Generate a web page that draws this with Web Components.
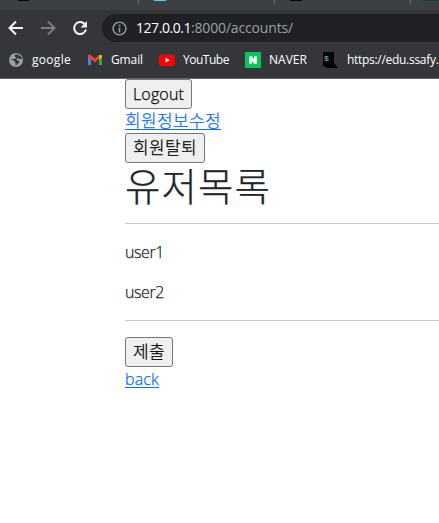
<!DOCTYPE html>
<html lang="ko">
<head>
<meta charset="utf-8">
<title>accounts</title>
<style>
html,body{margin:0;height:100%;overflow:hidden;background:#fff}
body{font-family:"Open Sans","Noto Sans CJK KR",sans-serif}
</style>
</head>
<body>
<browser-window></browser-window>
<script>
// A single line of text whose tracking is adjusted to fill the width given in its w attribute.
customElements.define('fit-text', class extends HTMLElement {
  connectedCallback() {
    if (this.shadowRoot) return;
    const r = this.attachShadow({mode: 'open'});
    r.innerHTML = '<style>:host{display:inline-block;white-space:nowrap}span{display:inline-block;text-decoration:inherit}</style><span><slot></slot></span>';
    const w = +this.getAttribute('w');
    this.style.width = w + 'px';
    const s = r.querySelector('span');
    s.style.letterSpacing = (w - s.getBoundingClientRect().width) / this.textContent.length + 'px';
  }
});
const define = (name, html) => customElements.define(name, class extends HTMLElement {
  connectedCallback() {
    if (!this.shadowRoot) this.attachShadow({mode: 'open'}).innerHTML = html;
  }
});
define('tab-strip', `<style>
:host{display:grid;grid-template-columns:18px 11px 109px 1px 15px 12px 108px 1px 15px 12px 108px 1px 12px 16px;height:10px;background:#3c4043;align-items:start}
i{height:1px}.b{background:#000}.c{background:#62c9ee}.g{background:#123f36}.s{height:4px;background:#6b6e72}
</style><i></i><i class="b"></i><i></i><i class="s"></i><i></i><i class="c"></i><i></i><i class="s"></i><i></i><i class="b"></i><i></i><i class="s"></i><i></i><i class="g"></i>`);
define('nav-bar', `<style>
:host{display:flex;height:36px;box-sizing:border-box;padding:4px 0 4px 8px;align-items:center;background:#35363a}
svg{display:block;flex:none}.f{margin-left:16px}
.addr{margin-left:14px;flex:1;height:28px;border-radius:14px 0 0 14px;background:#202124;display:flex;align-items:center;padding-left:10px;font-size:14px;line-height:28px;color:#fff}
.addr svg{margin-right:9px}.d{color:#9aa0a6}
</style>
<svg width="16" height="16" viewBox="0 0 16 16" fill="none" stroke="#f1f3f4" stroke-width="2"><path d="M15 8H2.5M8 1.5L1.5 8L8 14.5"/></svg>
<svg class="f" width="16" height="16" viewBox="0 0 16 16" fill="none" stroke="#7c7e81" stroke-width="2"><path d="M1 8H13.5M8 1.5L14.5 8L8 14.5"/></svg>
<svg class="f" width="16" height="16" viewBox="0 0 16 16"><path d="M12.6 4A6 6 0 1 0 14 9.6" fill="none" stroke="#f1f3f4" stroke-width="2"/><path d="M15 1V7.5H8.5Z" fill="#f1f3f4"/></svg>
<div class="addr"><svg width="15" height="15" viewBox="0 0 15 15"><circle cx="7.5" cy="7.5" r="6.4" fill="none" stroke="#9aa0a6" stroke-width="1.4"/><path d="M6.7 3.7h1.6v1.6H6.7zM6.7 6.5h1.6v5H6.7z" fill="#9aa0a6"/></svg><fit-text w="55">127.0.0.1</fit-text><fit-text class="d" w="102">:8000/accounts/</fit-text></div>`);
define('book-mark', `<style>:host{display:flex;align-items:center;height:28px;color:#fff;font-size:12px;flex:none}::slotted(svg){display:block;flex:none}</style><slot></slot>`);
define('bookmark-bar', `<style>
:host{display:grid;grid-template-columns:79px 72px 86px 76px 118px;height:33px;box-sizing:border-box;padding-left:8px;background:#35363a;border-bottom:1px solid #66676a}
fit-text{margin-left:8px;line-height:16px;padding-bottom:1px}
</style>
<book-mark><svg width="16" height="16" viewBox="0 0 16 16"><circle cx="8" cy="8" r="7" fill="#9aa0a6"/><path d="M8.5 2.3C6 3 5.8 4.2 8 5.3L7 7H2.5C4 8 5.5 8.2 6.5 9.2L7.5 11V13.5C9.5 12.5 10 11 11.7 10.2C10.8 8.5 9 8.5 8 7.3L10 6.2L11.7 7H14C13.8 4.8 11.5 3 8.5 2.3Z" fill="#35363a"/></svg><fit-text w="39">google</fit-text></book-mark>
<book-mark><svg width="16" height="16" viewBox="0 0 16 16"><path d="M1 4v9h3V7z" fill="#4285f4"/><path d="M12 7v6h3V4z" fill="#34a853"/><path d="M1 5V3.3Q2 2 3.5 3L8 6.5 12 3.3V7L8 10.3 1 5z" fill="#ea4335"/><path d="M12 3.3Q14.5 2 15 4v1l-3 2.5z" fill="#fbbc04"/></svg><fit-text w="32">Gmail</fit-text></book-mark>
<book-mark><svg width="16" height="16" viewBox="0 0 16 16"><rect y="2.5" width="16" height="11.5" rx="3" fill="#f00"/><path d="M6.5 5.8v4.8L10.7 8.2z" fill="#fff"/></svg><fit-text w="46">YouTube</fit-text></book-mark>
<book-mark><svg width="16" height="16" viewBox="0 0 16 16"><path d="M0 0h16v16H0z" fill="#03c75a"/><path d="M4.3 4.3h2.8l2 3.2V4.3h2.8v7.4H9.1L6.9 8.4v3.3H4.3z" fill="#fff"/></svg><fit-text w="38">NAVER</fit-text></book-mark>
<book-mark><svg width="18" height="16" viewBox="0 0 18 16"><path d="M2 0H13V11L17 16H7L2 14Z" fill="#000"/><text x="3.3" y="9" font-family="Liberation Sans" font-size="8" fill="#66c7ea">$</text></svg><fit-text w="91.5" style="margin-left:8px">https://edu.ssafy.</fit-text></book-mark>`);
define('push-button', `<style>:host{display:block}button{font:inherit;line-height:24px;height:30px;margin:0;border:1px solid #767676;border-radius:3px;background:#efefef;color:#000;display:block;box-sizing:border-box;padding:2px 7px}::slotted(fit-text){vertical-align:top}</style><button><slot></slot></button>`);
define('text-link', `<style>:host{display:block;height:24px;line-height:24px;font-size:16px}a{display:inline-block;color:#0d6efd;text-decoration:none;height:20px;line-height:24px;border-bottom:1px solid #0d6efd;vertical-align:top}::slotted(fit-text){vertical-align:top}</style><a href="#"><slot></slot></a>`);
define('accounts-page', `<style>
:host{display:block;padding:0 0 0 125px;color:#212529;font-size:16px;line-height:24px;font-weight:300;-webkit-text-stroke:.25px}
h1{font-size:40px;font-weight:300;line-height:48px;height:48px;margin:0 0 12px}
h1 fit-text{vertical-align:top;margin:-3px 0 0;font-size:38.5px}
hr{border:0;height:1px;background:#c8c9ca;margin:0 0 16px}
p{margin:0 0 16px;height:24px}.k{font-family:"Noto Sans CJK KR",sans-serif;font-weight:300}
.m{font-size:17px;line-height:22px}
</style>
<push-button><fit-text w="51">Logout</fit-text></push-button>
<text-link><fit-text class="k m" w="96">회원정보수정</fit-text></text-link>
<push-button><fit-text class="k m" w="64">회원탈퇴</fit-text></push-button>
<h1><fit-text class="k" w="146">유저목록</fit-text></h1>
<hr><p><fit-text w="39">user1</fit-text></p><p><fit-text w="39">user2</fit-text></p><hr>
<push-button><fit-text class="k m" w="32">제출</fit-text></push-button>
<text-link><fit-text w="34">back</fit-text></text-link>`);
define('browser-window', `<style>:host{display:block;width:439px;height:523px;overflow:hidden;background:#fff}</style>
<tab-strip></tab-strip><nav-bar></nav-bar><bookmark-bar></bookmark-bar><accounts-page></accounts-page>`);
</script>
</body>
</html>
